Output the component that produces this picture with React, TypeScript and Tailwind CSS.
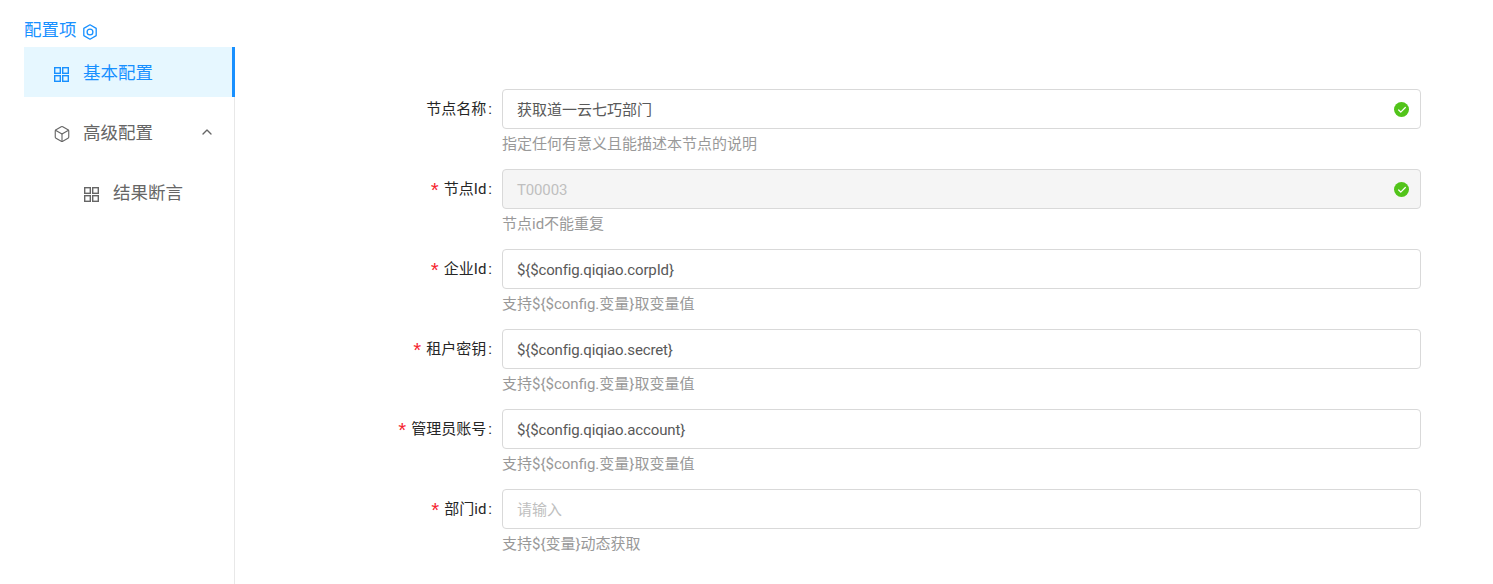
import { Box, ChevronUp, Check } from "lucide-react";

const FONT = "font-['Roboto','Noto_Sans_CJK_SC',sans-serif]";

type Field = {
  label: string;
  value?: string;
  placeholder?: string;
  help: string;
  required?: boolean;
  disabled?: boolean;
  success?: boolean;
  latin?: boolean;
};

const fields: Field[] = [
  { label: "节点名称", value: "获取道一云七巧部门", help: "指定任何有意义且能描述本节点的说明", success: true },
  { label: "节点Id", value: "T00003", help: "节点id不能重复", required: true, disabled: true, success: true, latin: true },
  { label: "企业Id", value: "${$config.qiqiao.corpId}", help: "支持${$config.变量}取变量值", required: true, latin: true },
  { label: "租户密钥", value: "${$config.qiqiao.secret}", help: "支持${$config.变量}取变量值", required: true, latin: true },
  { label: "管理员账号", value: "${$config.qiqiao.account}", help: "支持${$config.变量}取变量值", required: true, latin: true },
  { label: "部门id", placeholder: "请输入", help: "支持${变量}动态获取", required: true },
];

function GridIcon() {
  return (
    <svg width="15" height="15" viewBox="0 0 15 15" fill="none" stroke="currentColor" strokeWidth="1.4">
      <rect x="0.7" y="0.7" width="5.6" height="5.6" />
      <rect x="8.7" y="0.7" width="5.6" height="5.6" />
      <rect x="0.7" y="8.7" width="5.6" height="5.6" />
      <rect x="8.7" y="8.7" width="5.6" height="5.6" />
    </svg>
  );
}

function SettingIcon() {
  return (
    <svg width="14" height="16" viewBox="0 0 14 16" fill="none" stroke="currentColor" strokeWidth="1.3">
      <path d="M7 0.8 L13.2 4.4 V11.6 L7 15.2 L0.8 11.6 V4.4 Z" strokeLinejoin="round" />
      <circle cx="7" cy="8" r="2.9" />
    </svg>
  );
}

function FormRow({ label, value, placeholder, help, required, disabled, success, latin }: Field) {
  return (
    <div className="flex h-[80px]">
      <div className="flex h-[40px] w-[254px] shrink-0 items-center justify-end pr-[10px] text-[15px] text-[#262626]">
        {required && (
          <span className="mr-[3px] mt-[8px] font-['Liberation_Mono'] text-[20px] leading-none text-[#f5222d]">*</span>
        )}
        <span>{label}</span>
        <span className="ml-[2px]">:</span>
      </div>
      <div className="w-[919px]">
        <div
          className={`relative flex h-[40px] items-center rounded-[4px] border border-[#d9d9d9] px-[14px] pt-[2px] text-[15px] ${
            disabled ? "bg-[#f5f5f5] text-[#bfbfbf]" : "bg-white text-[#595959]"
          } ${latin ? "tracking-[-0.15px]" : ""}`}
        >
          {value ?? <span className="text-[#bfbfbf]">{placeholder}</span>}
          {success && (
            <span className="absolute right-[11px] top-[12px] flex h-[15px] w-[15px] items-center justify-center rounded-full bg-[#52c41a] text-white">
              <Check size={10} strokeWidth={3} />
            </span>
          )}
        </div>
        <div className="mt-[3px] text-[15px] leading-[24px] text-[#999]">{help}</div>
      </div>
    </div>
  );
}

export default function App() {
  return (
    <div className={`h-[584px] overflow-hidden bg-white ${FONT}`}>
      <div className="flex h-[47px] items-end pb-[4px] pl-[24px] text-[17.5px] leading-[26px] text-[#1890ff]">
        配置项
        <span className="mb-[3px] ml-[6px]">
          <SettingIcon />
        </span>
      </div>
      <div className="flex h-[537px]">
        <div className="ml-[24px] w-[211px] shrink-0 border-r border-[#e8e8e8] text-[17.5px]">
          <div className="mr-[-1px] flex h-[50px] items-center border-r-[3px] border-[#1890ff] bg-[#e6f7ff] pl-[30px] pt-[4px] text-[#1890ff]">
            <GridIcon />
            <span className="ml-[15px] -translate-x-[1px] -translate-y-[1px]">基本配置</span>
          </div>
          <div className="mt-[10px] flex h-[50px] items-center pl-[29px] pr-[19px] pt-[4px] text-[#666]">
            <Box size={18} strokeWidth={1.5} />
            <span className="ml-[13px] -translate-x-[1px] -translate-y-[1px]">高级配置</span>
            <ChevronUp size={16} strokeWidth={2} className="ml-auto -translate-y-[2px]" />
          </div>
          <div className="mt-[10px] flex h-[50px] items-center pl-[60px] pt-[4px] text-[#666]">
            <GridIcon />
            <span className="ml-[15px] -translate-x-[1px] -translate-y-[1px]">结果断言</span>
          </div>
        </div>
        <div className="flex-1 pl-[13px] pt-[42px]">
          {fields.map((f) => (
            <FormRow key={f.label} {...f} />
          ))}
        </div>
      </div>
    </div>
  );
}
